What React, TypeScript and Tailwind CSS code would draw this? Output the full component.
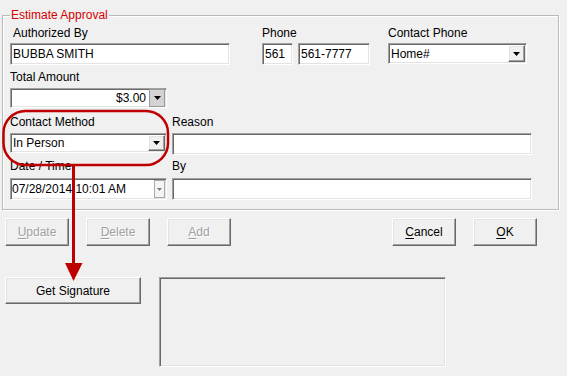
import React from "react";

const sunken =
  "box-border border border-t-[#a0a0a0] border-l-[#a0a0a0] border-r-white border-b-white shadow-[inset_1px_1px_0_#696969,inset_-1px_-1px_0_#e3e3e3]";
const raised =
  "box-border border border-t-white border-l-white border-r-[#696969] border-b-[#696969] shadow-[inset_-1px_-1px_0_#a0a0a0,inset_1px_1px_0_#e3e3e3] bg-[#f0f0f0]";

function Tri({ color = "#000", w = 7, h = 4 }: { color?: string; w?: number; h?: number }) {
  return (
    <svg width={w} height={h} viewBox={`0 0 ${w} ${h}`}>
      <polygon points={`0,0 ${w},0 ${w / 2},${h}`} fill={color} />
    </svg>
  );
}

function Btn({ label, u, disabled, className }: { label: string; u: number; disabled?: boolean; className: string }) {
  const a = label.slice(0, u);
  const b = label.slice(u, u + 1);
  const c = label.slice(u + 1);
  return (
    <div
      className={`${raised} ${className} flex items-center justify-center text-[12px] ${
        disabled ? "text-[#a0a0a0] [text-shadow:1px_1px_0_#ffffff]" : "text-black"
      }`}
    >
      <span>
        {a}
        {b && <span className="underline underline-offset-2">{b}</span>}
        {c}
      </span>
    </div>
  );
}

export default function App() {
  return (
    <div
      className="relative w-[567px] h-[376px] overflow-hidden bg-[#f0f0f0] text-[12px] leading-[14px] text-black"
      style={{ fontFamily: '"Liberation Sans", Arial, sans-serif' }}
    >
      {/* Group box */}
      <div className="relative ml-[2px] mt-[15px] w-[557px] h-[195px] box-border border border-[#b9b9b9] shadow-[1px_1px_0_#ffffff,inset_1px_1px_0_#ffffff]">
        <span className="absolute left-[7px] top-[-8px] px-[1px] bg-[#f0f0f0] text-[#d40000] leading-[14px]">
          Estimate Approval
        </span>

        {/* Row A labels */}
        <div className="flex mt-[10px] h-[14px]">
          <span className="ml-[10px] w-[249px]">Authorized By</span>
          <span className="w-[126px]">Phone</span>
          <span>Contact Phone</span>
        </div>
        {/* Row B inputs */}
        <div className="flex items-start mt-[3px]">
          <div className={`${sunken} bg-white ml-[7px] w-[220px] h-[22px] flex items-center pl-[2px]`}>BUBBA SMITH</div>
          <div className={`${sunken} bg-white ml-[32px] w-[31px] h-[22px] flex items-center pl-[2px]`}>561</div>
          <div className={`${sunken} bg-white ml-[5px] w-[72px] h-[22px] flex items-center pl-[2px]`}>561-7777</div>
          <div className={`${sunken} bg-white ml-[18px] w-[139px] h-[21px] flex items-center pl-[2px] pr-[1px]`}>
            <span className="flex-1">Home#</span>
            <div className={`${raised} w-[17px] h-[17px] flex items-center justify-center`}>
              <Tri />
            </div>
          </div>
        </div>

        {/* Row C */}
        <div className="flex mt-[5px] h-[14px]">
          <span className="ml-[7px]">Total Amount</span>
        </div>
        {/* Row D */}
        <div className="flex mt-[4px]">
          <div className={`${sunken} bg-white ml-[7px] w-[157px] h-[20px] flex items-center pr-[1px]`}>
            <span className="flex-1 text-right pr-[3px]">$3.00</span>
            <div className="box-border w-[16px] h-[18px] bg-[#d3d3d3] border border-[#9a9a9a] flex items-center justify-center">
              <Tri />
            </div>
          </div>
        </div>

        {/* Row E */}
        <div className="flex mt-[7px] h-[14px]">
          <span className="ml-[7px] w-[162px]">Contact Method</span>
          <span>Reason</span>
        </div>
        {/* Row F */}
        <div className="flex items-start mt-[4px]">
          <div className={`${sunken} bg-white ml-[7px] w-[157px] h-[20px] flex items-center pl-[2px] pr-[1px]`}>
            <span className="flex-1">In Person</span>
            <div className={`${raised} w-[17px] h-[16px] flex items-center justify-center`}>
              <Tri />
            </div>
          </div>
          <div className={`${sunken} bg-white ml-[5px] w-[360px] h-[22px]`} />
        </div>

        {/* Row G */}
        <div className="flex mt-[4px] h-[14px]">
          <span className="ml-[7px] w-[162px]">Date / Time</span>
          <span>By</span>
        </div>
        {/* Row H */}
        <div className="flex items-start mt-[5px]">
          <div className={`${sunken} bg-white ml-[7px] w-[157px] h-[22px] flex items-center pl-[1px] pr-[1px]`}>
            <span className="flex-1">07/28/2014 10:01 AM</span>
            <div className="box-border w-[11px] h-[18px] bg-[#f4f4f4] border border-[#a8a8a8] flex items-center justify-center">
              <Tri color="#7a7a7a" w={5} h={3} />
            </div>
          </div>
          <div className={`${sunken} bg-white ml-[5px] w-[360px] h-[22px]`} />
        </div>
      </div>

      {/* Button row */}
      <div className="flex mt-[8px]">
        <Btn label="Update" u={0} disabled className="ml-[5px] w-[64px] h-[28px]" />
        <Btn label="Delete" u={0} disabled className="ml-[17px] w-[64px] h-[28px]" />
        <Btn label="Add" u={0} disabled className="ml-[17px] w-[64px] h-[28px]" />
        <Btn label="Cancel" u={0} className="ml-[161px] w-[64px] h-[28px]" />
        <Btn label="OK" u={0} className="ml-[17px] w-[64px] h-[28px]" />
      </div>

      {/* Signature row */}
      <div className="flex items-start mt-[31px]">
        <div className={`${raised} ml-[5px] w-[136px] h-[27px] flex items-center justify-center`}>Get Signature</div>
        <div className={`${sunken} ml-[18px] w-[287px] h-[90px] bg-[#f0f0f0]`} />
      </div>

      {/* Annotation overlay */}
      <svg className="absolute left-0 top-0 pointer-events-none" width="567" height="376" viewBox="0 0 567 376">
        <rect x="3.5" y="111" width="164.5" height="54" rx="22" ry="22" fill="none" stroke="#bf0000" strokeWidth="2.5" />
        <line x1="73.5" y1="165" x2="73.5" y2="266" stroke="#bf0000" strokeWidth="3" />
        <polygon points="65,263 82.5,263 73.5,281" fill="#bf0000" />
      </svg>
    </div>
  );
}
